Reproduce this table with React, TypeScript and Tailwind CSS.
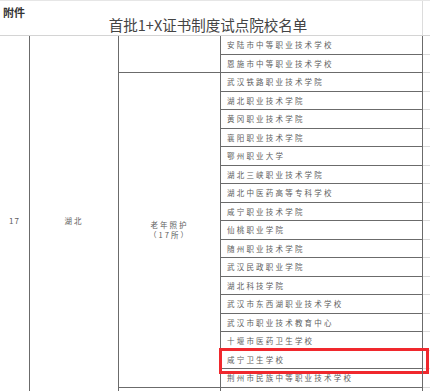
import React from 'react'

const schools = [
  '安陆市中等职业技术学校',
  '恩施市中等职业技术学校',
  '武汉铁路职业技术学院',
  '湖北职业技术学院',
  '黄冈职业技术学院',
  '襄阳职业技术学院',
  '鄂州职业大学',
  '湖北三峡职业技术学院',
  '湖北中医药高等专科学校',
  '咸宁职业技术学院',
  '仙桃职业学院',
  '随州职业技术学院',
  '武汉民政职业学院',
  '湖北科技学院',
  '武汉市东西湖职业技术学校',
  '武汉市职业技术教育中心',
  '十堰市医药卫生学校',
  '咸宁卫生学校',
  '荆州市民族中等职业技术学校',
  '',
]

const font = "font-['Noto_Sans_CJK_SC','Noto_Sans',sans-serif]"

function SchoolRow({ name, marked }: { name: string; marked?: boolean }) {
  return (
    <div className="flex h-[18.5px]">
      <div className="relative w-[202px] border-r border-b border-[#6b6b6b] flex items-center pl-[6px] text-[7.5px] leading-none tracking-[2.2px] text-[#5e5e5e]">
        {name}
        {marked && (
          <div className="absolute left-[-2px] top-[-3px] w-[210px] h-[26px] border-[3px] border-[#f0282d]" />
        )}
      </div>
      <div className="flex-1 border-b border-[#dcdcdc]" />
    </div>
  )
}

export default function App() {
  return (
    <div className={`w-[430px] h-[391px] overflow-hidden bg-white border-t border-[#e6e6e6] ${font}`}>
      {/* Header */}
      <div className="flex h-[35px] border-b border-[#d4d4d4]">
        <div className="w-[423px] border-r border-[#dcdcdc] flex flex-col">
          <div className="pt-[5px] pl-[3px] text-[11px] leading-[12px] font-bold text-[#333]">附件</div>
          <div className="pr-[6px] text-center text-[14.5px] leading-[12px] text-[#444] mt-[1px]">
            首批1+X证书制度试点院校名单
          </div>
        </div>
        <div className="flex-1" />
      </div>

      {/* Table */}
      <div className="flex text-[#5e5e5e]">
        <div className="w-[30px] h-[370px] border-r border-[#6b6b6b] flex items-center justify-center text-[8px] leading-none tracking-[1px]">
          17
        </div>
        <div className="w-[89px] h-[370px] border-r border-[#6b6b6b] flex items-center justify-center text-[7.5px] leading-none tracking-[2px]">
          湖北
        </div>
        <div className="w-[102px] border-r border-[#6b6b6b] flex flex-col">
          <div className="h-[37px] border-b border-[#6b6b6b]" />
          <div className="h-[314.5px] border-b border-[#6b6b6b] flex flex-col items-center justify-center text-[7.5px] leading-[10px] tracking-[2px]">
            <span className="block">老年照护</span>
            <span className="block">（17所）</span>
          </div>
          <div className="h-[18.5px]" />
        </div>
        <div className="flex-1 flex flex-col">
          {schools.map((s, i) => (
            <SchoolRow key={i} name={s} marked={s === '咸宁卫生学校'} />
          ))}
        </div>
      </div>
    </div>
  )
}
